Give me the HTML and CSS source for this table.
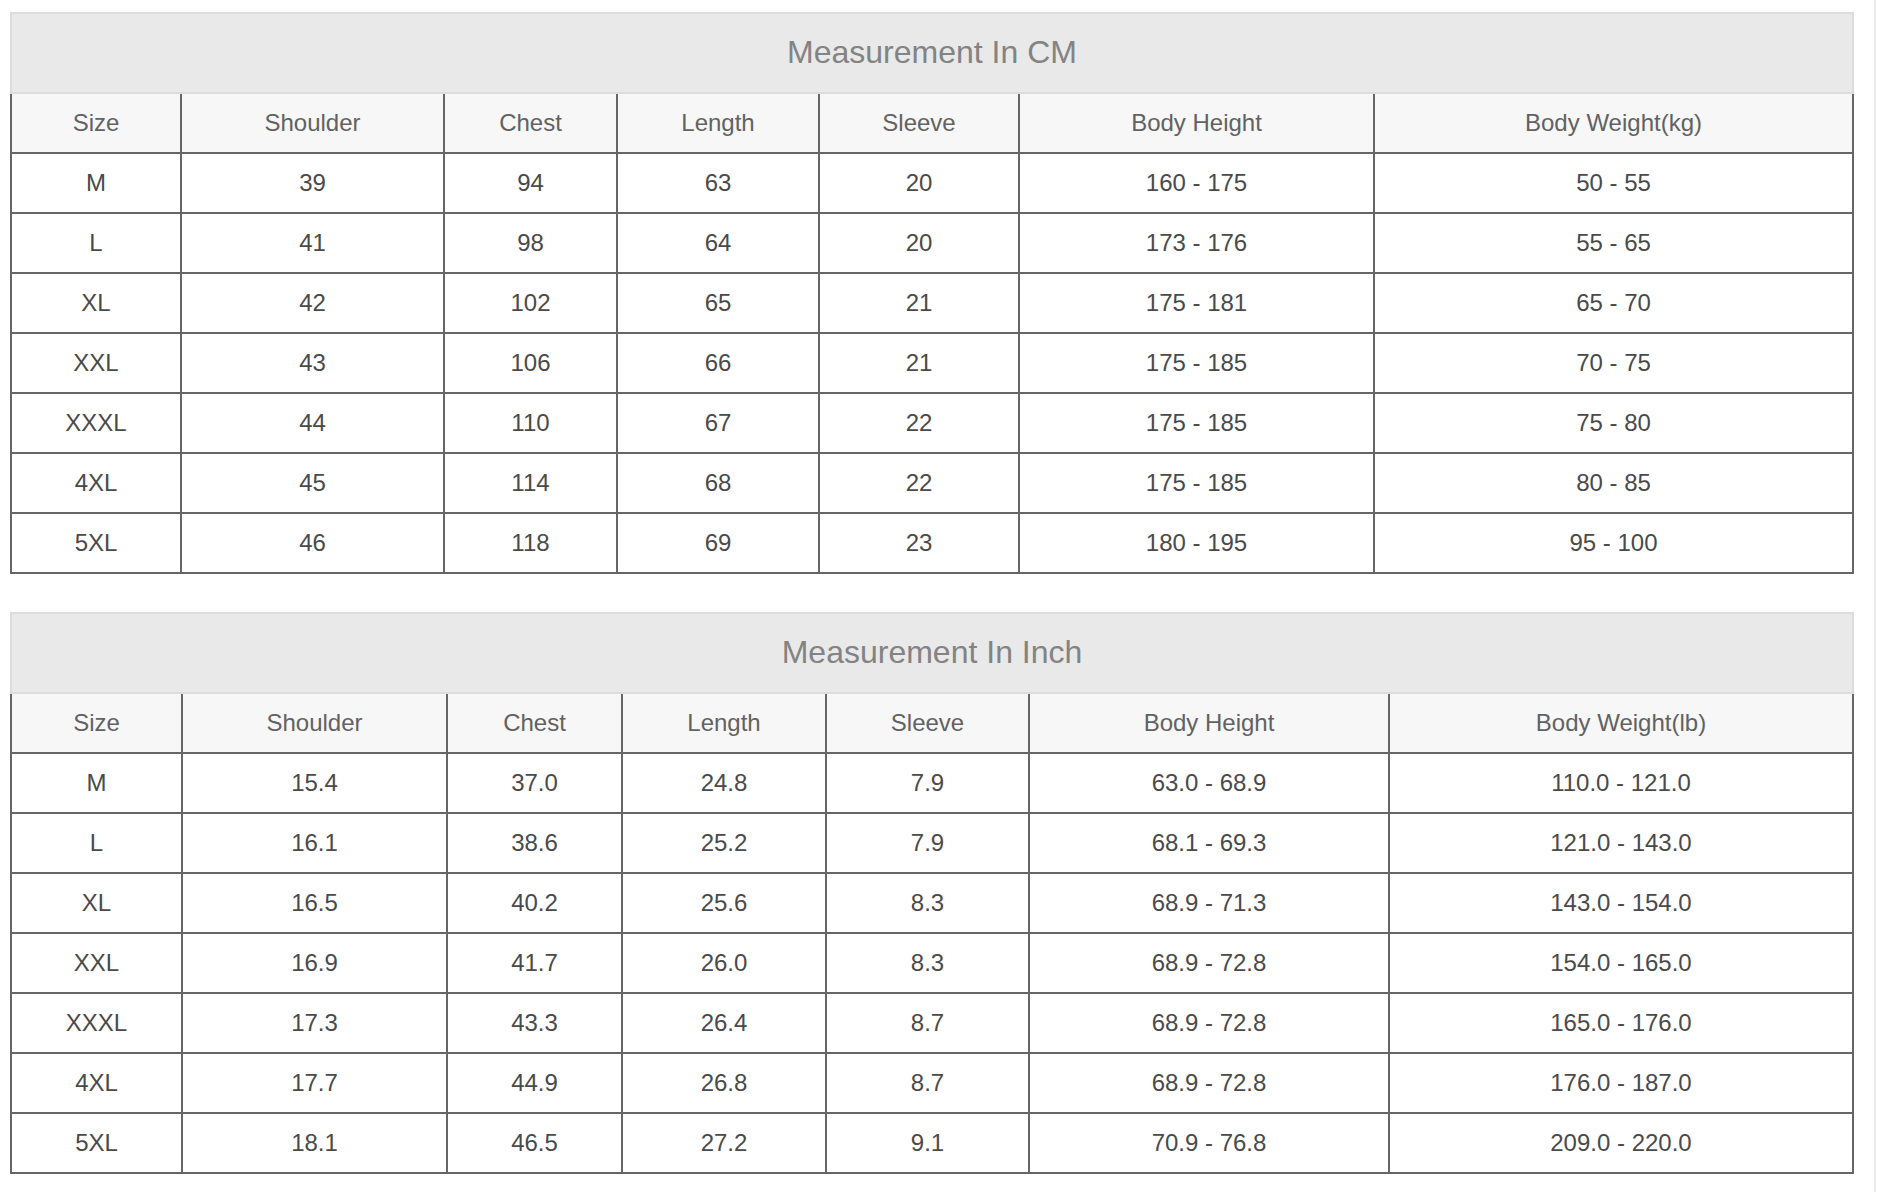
FILE: index.html
```html
<!DOCTYPE html>
<html lang="en">
<head>
<meta charset="utf-8">
<title>Size Chart</title>
<link rel="stylesheet" href="styles.css">
</head>
<body>
<main class="page">
  <section class="chart chart-cm">
    <div class="chart-title">Measurement In CM</div>
    <table class="size-table">
      <thead>
        <tr>
          <th class="c1">Size</th><th class="c2">Shoulder</th><th class="c3">Chest</th><th class="c4">Length</th><th class="c5">Sleeve</th><th class="c6">Body Height</th><th class="c7">Body Weight(kg)</th>
        </tr>
      </thead>
      <tbody>
        <tr><td>M</td><td>39</td><td>94</td><td>63</td><td>20</td><td>160 - 175</td><td>50 - 55</td></tr>
        <tr><td>L</td><td>41</td><td>98</td><td>64</td><td>20</td><td>173 - 176</td><td>55 - 65</td></tr>
        <tr><td>XL</td><td>42</td><td>102</td><td>65</td><td>21</td><td>175 - 181</td><td>65 - 70</td></tr>
        <tr><td>XXL</td><td>43</td><td>106</td><td>66</td><td>21</td><td>175 - 185</td><td>70 - 75</td></tr>
        <tr><td>XXXL</td><td>44</td><td>110</td><td>67</td><td>22</td><td>175 - 185</td><td>75 - 80</td></tr>
        <tr><td>4XL</td><td>45</td><td>114</td><td>68</td><td>22</td><td>175 - 185</td><td>80 - 85</td></tr>
        <tr><td>5XL</td><td>46</td><td>118</td><td>69</td><td>23</td><td>180 - 195</td><td>95 - 100</td></tr>
      </tbody>
    </table>
  </section>

  <section class="chart chart-inch">
    <div class="chart-title">Measurement In Inch</div>
    <table class="size-table">
      <thead>
        <tr>
          <th class="c1">Size</th><th class="c2">Shoulder</th><th class="c3">Chest</th><th class="c4">Length</th><th class="c5">Sleeve</th><th class="c6">Body Height</th><th class="c7">Body Weight(lb)</th>
        </tr>
      </thead>
      <tbody>
        <tr><td>M</td><td>15.4</td><td>37.0</td><td>24.8</td><td>7.9</td><td>63.0 - 68.9</td><td>110.0 - 121.0</td></tr>
        <tr><td>L</td><td>16.1</td><td>38.6</td><td>25.2</td><td>7.9</td><td>68.1 - 69.3</td><td>121.0 - 143.0</td></tr>
        <tr><td>XL</td><td>16.5</td><td>40.2</td><td>25.6</td><td>8.3</td><td>68.9 - 71.3</td><td>143.0 - 154.0</td></tr>
        <tr><td>XXL</td><td>16.9</td><td>41.7</td><td>26.0</td><td>8.3</td><td>68.9 - 72.8</td><td>154.0 - 165.0</td></tr>
        <tr><td>XXXL</td><td>17.3</td><td>43.3</td><td>26.4</td><td>8.7</td><td>68.9 - 72.8</td><td>165.0 - 176.0</td></tr>
        <tr><td>4XL</td><td>17.7</td><td>44.9</td><td>26.8</td><td>8.7</td><td>68.9 - 72.8</td><td>176.0 - 187.0</td></tr>
        <tr><td>5XL</td><td>18.1</td><td>46.5</td><td>27.2</td><td>9.1</td><td>70.9 - 76.8</td><td>209.0 - 220.0</td></tr>
      </tbody>
    </table>
  </section>
</main>
<div class="scroll-track"></div>
</body>
</html>
```

FILE: styles.css
```css
html, body {
  margin: 0;
  padding: 0;
  background: #ffffff;
}

body {
  display: flex;
  justify-content: space-between;
  font-family: "Liberation Sans", Arial, Helvetica, sans-serif;
  height: 1192px;
  overflow: hidden;
}

.page {
  padding: 12px 0 0 10px;
  display: flex;
  flex-direction: column;
  gap: 38px;
}

.chart {
  width: 1844px;
}

.chart-title {
  box-sizing: border-box;
  height: 82px;
  border: 2px solid #dddddd;
  background: #e9e9e9;
  color: #838383;
  font-size: 32px;
  line-height: 36px;
  display: flex;
  align-items: center;
  justify-content: center;
  padding-bottom: 2px;
}

.size-table {
  width: 1844px;
  table-layout: fixed;
  border-collapse: separate;
  border-spacing: 0;
  border-left: 2px solid #666666;
  font-size: 24px;
  line-height: 28px;
}

.size-table th,
.size-table td {
  box-sizing: content-box;
  height: 58px;
  padding: 0;
  text-align: center;
  vertical-align: middle;
  border-right: 2px solid #666666;
  border-bottom: 2px solid #666666;
  font-weight: normal;
}

.size-table th {
  background: #f7f7f7;
  color: #626262;
}

.size-table td {
  background: #ffffff;
  color: #4a4a4a;
}

.chart-cm .c1 { width: 168px; }
.chart-cm .c2 { width: 261px; }
.chart-cm .c3 { width: 171px; }
.chart-cm .c4 { width: 200px; }
.chart-cm .c5 { width: 198px; }
.chart-cm .c6 { width: 353px; }
.chart-cm .c7 { width: 477px; }

.chart-inch .c1 { width: 169px; }
.chart-inch .c2 { width: 263px; }
.chart-inch .c3 { width: 173px; }
.chart-inch .c4 { width: 202px; }
.chart-inch .c5 { width: 201px; }
.chart-inch .c6 { width: 358px; }
.chart-inch .c7 { width: 462px; }

.scroll-track {
  width: 2px;
  margin-right: 2px;
  background: #ececec;
  height: 1192px;
}
```
